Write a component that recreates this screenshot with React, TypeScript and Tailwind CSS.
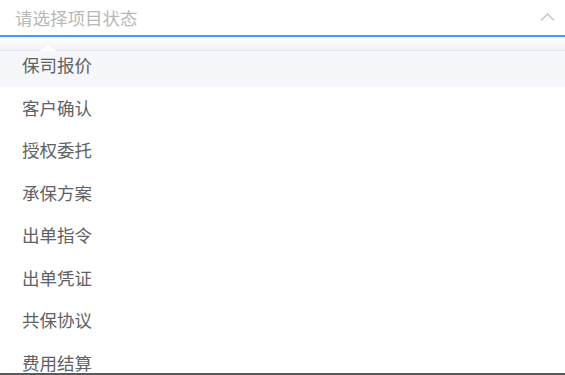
const statuses = ['保司报价', '客户确认', '授权委托', '承保方案', '出单指令', '出单凭证', '共保协议', '费用结算'];

export default function App() {
  return (
    <div className="w-[565px] h-[375px] overflow-hidden bg-white flex flex-col font-['Noto_Sans_CJK_SC','Noto_Sans',sans-serif]">
      {/* select input */}
      <div className="h-[35px] shrink-0 flex items-center justify-between pl-[15px] pr-[10px]">
        <span className="text-[17.5px] leading-none text-[#b8b8b8]">请选择项目状态</span>
        <svg width="15" height="9" viewBox="0 0 15 9">
          <path d="M1 7.5 L7.5 1 L14 7.5" fill="none" stroke="#c0c4cc" strokeWidth="1.4" />
        </svg>
      </div>
      <div className="h-[1.5px] shrink-0 bg-[#409eff]" />

      {/* popper gap + arrow */}
      <div className="relative h-[13.5px] shrink-0 bg-[linear-gradient(to_bottom,#ffffff,#f2f2f4)]">
        <svg width="18" height="8" viewBox="0 0 18 8" className="absolute left-[39px] bottom-[-1px]">
          <path d="M0 8 L9 0 L18 8 Z" fill="#ffffff" />
          <path d="M0 8 L9 0 L18 8" fill="none" stroke="#ebeef5" strokeWidth="1" />
        </svg>
      </div>

      {/* dropdown list */}
      <div className="flex-1 border-t border-[#e4e7ed] overflow-hidden">
        <ul className="-mt-[7px]">
          {statuses.map((s, i) => (
            <li
              key={s}
              className={`h-[42.5px] flex items-center pl-[22px] text-[17.5px] text-[#606266] ${i === 0 ? 'bg-[#f5f7fa]' : ''}`}
            >
              {s}
            </li>
          ))}
        </ul>
      </div>

      <div className="h-[2px] shrink-0 bg-[#5a5a5a]" />
    </div>
  );
}
